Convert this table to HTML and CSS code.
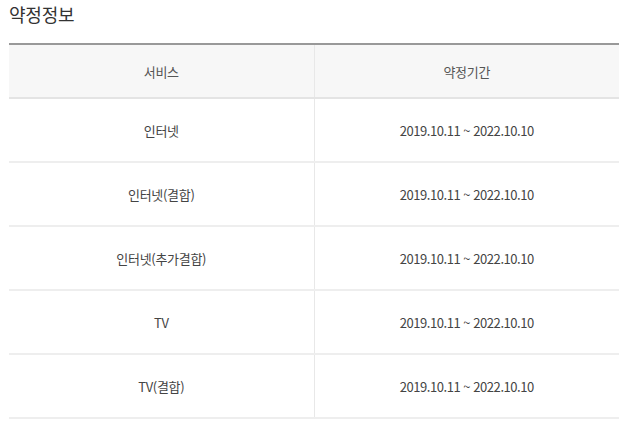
FILE: index.html
```html
<!DOCTYPE html>
<html lang="ko">
<head>
<meta charset="utf-8">
<link rel="stylesheet" href="styles.css">
</head>
<body>
<div class="page">
  <h2 class="title">약정정보</h2>
  <table class="contract">
    <thead>
      <tr><th>서비스</th><th>약정기간</th></tr>
    </thead>
    <tbody>
      <tr><td>인터넷</td><td class="date">2019.10.11 ~ 2022.10.10</td></tr>
      <tr><td>인터넷(결합)</td><td class="date">2019.10.11 ~ 2022.10.10</td></tr>
      <tr><td>인터넷(추가결합)</td><td class="date">2019.10.11 ~ 2022.10.10</td></tr>
      <tr><td>TV</td><td class="date">2019.10.11 ~ 2022.10.10</td></tr>
      <tr><td>TV(결합)</td><td class="date">2019.10.11 ~ 2022.10.10</td></tr>
    </tbody>
  </table>
</div>
</body>
</html>
```

FILE: styles.css
```css
html, body {
  margin: 0;
  padding: 0;
  background: #fff;
}
.page {
  padding: 0 0 0 9px;
  font-family: "Noto Sans CJK KR", "Noto Sans", sans-serif;
  color: #444;
}
.title {
  margin: 0;
  height: 43px;
  font-size: 18px;
  font-weight: 400;
  line-height: 28px;
  color: #333;
  letter-spacing: -0.2px;
}
.contract {
  width: 610px;
  border-collapse: collapse;
  table-layout: fixed;
  border-top: 2px solid #999;
}
.contract th,
.contract td {
  width: 50%;
  text-align: center;
  font-size: 13px;
  font-weight: 400;
  padding: 0;
  letter-spacing: -0.3px;
}
.contract th {
  height: 52px;
  background: #f7f7f7;
  border-bottom: 2px solid #e4e4e4;
  color: #555;
}
.contract td {
  height: 62px;
  border-bottom: 2px solid #eee;
}
.contract th:first-child,
.contract td:first-child {
  border-right: 1px solid #e8e8e8;
}
.contract .date {
  letter-spacing: -0.45px;
  color: #444;
}
```
